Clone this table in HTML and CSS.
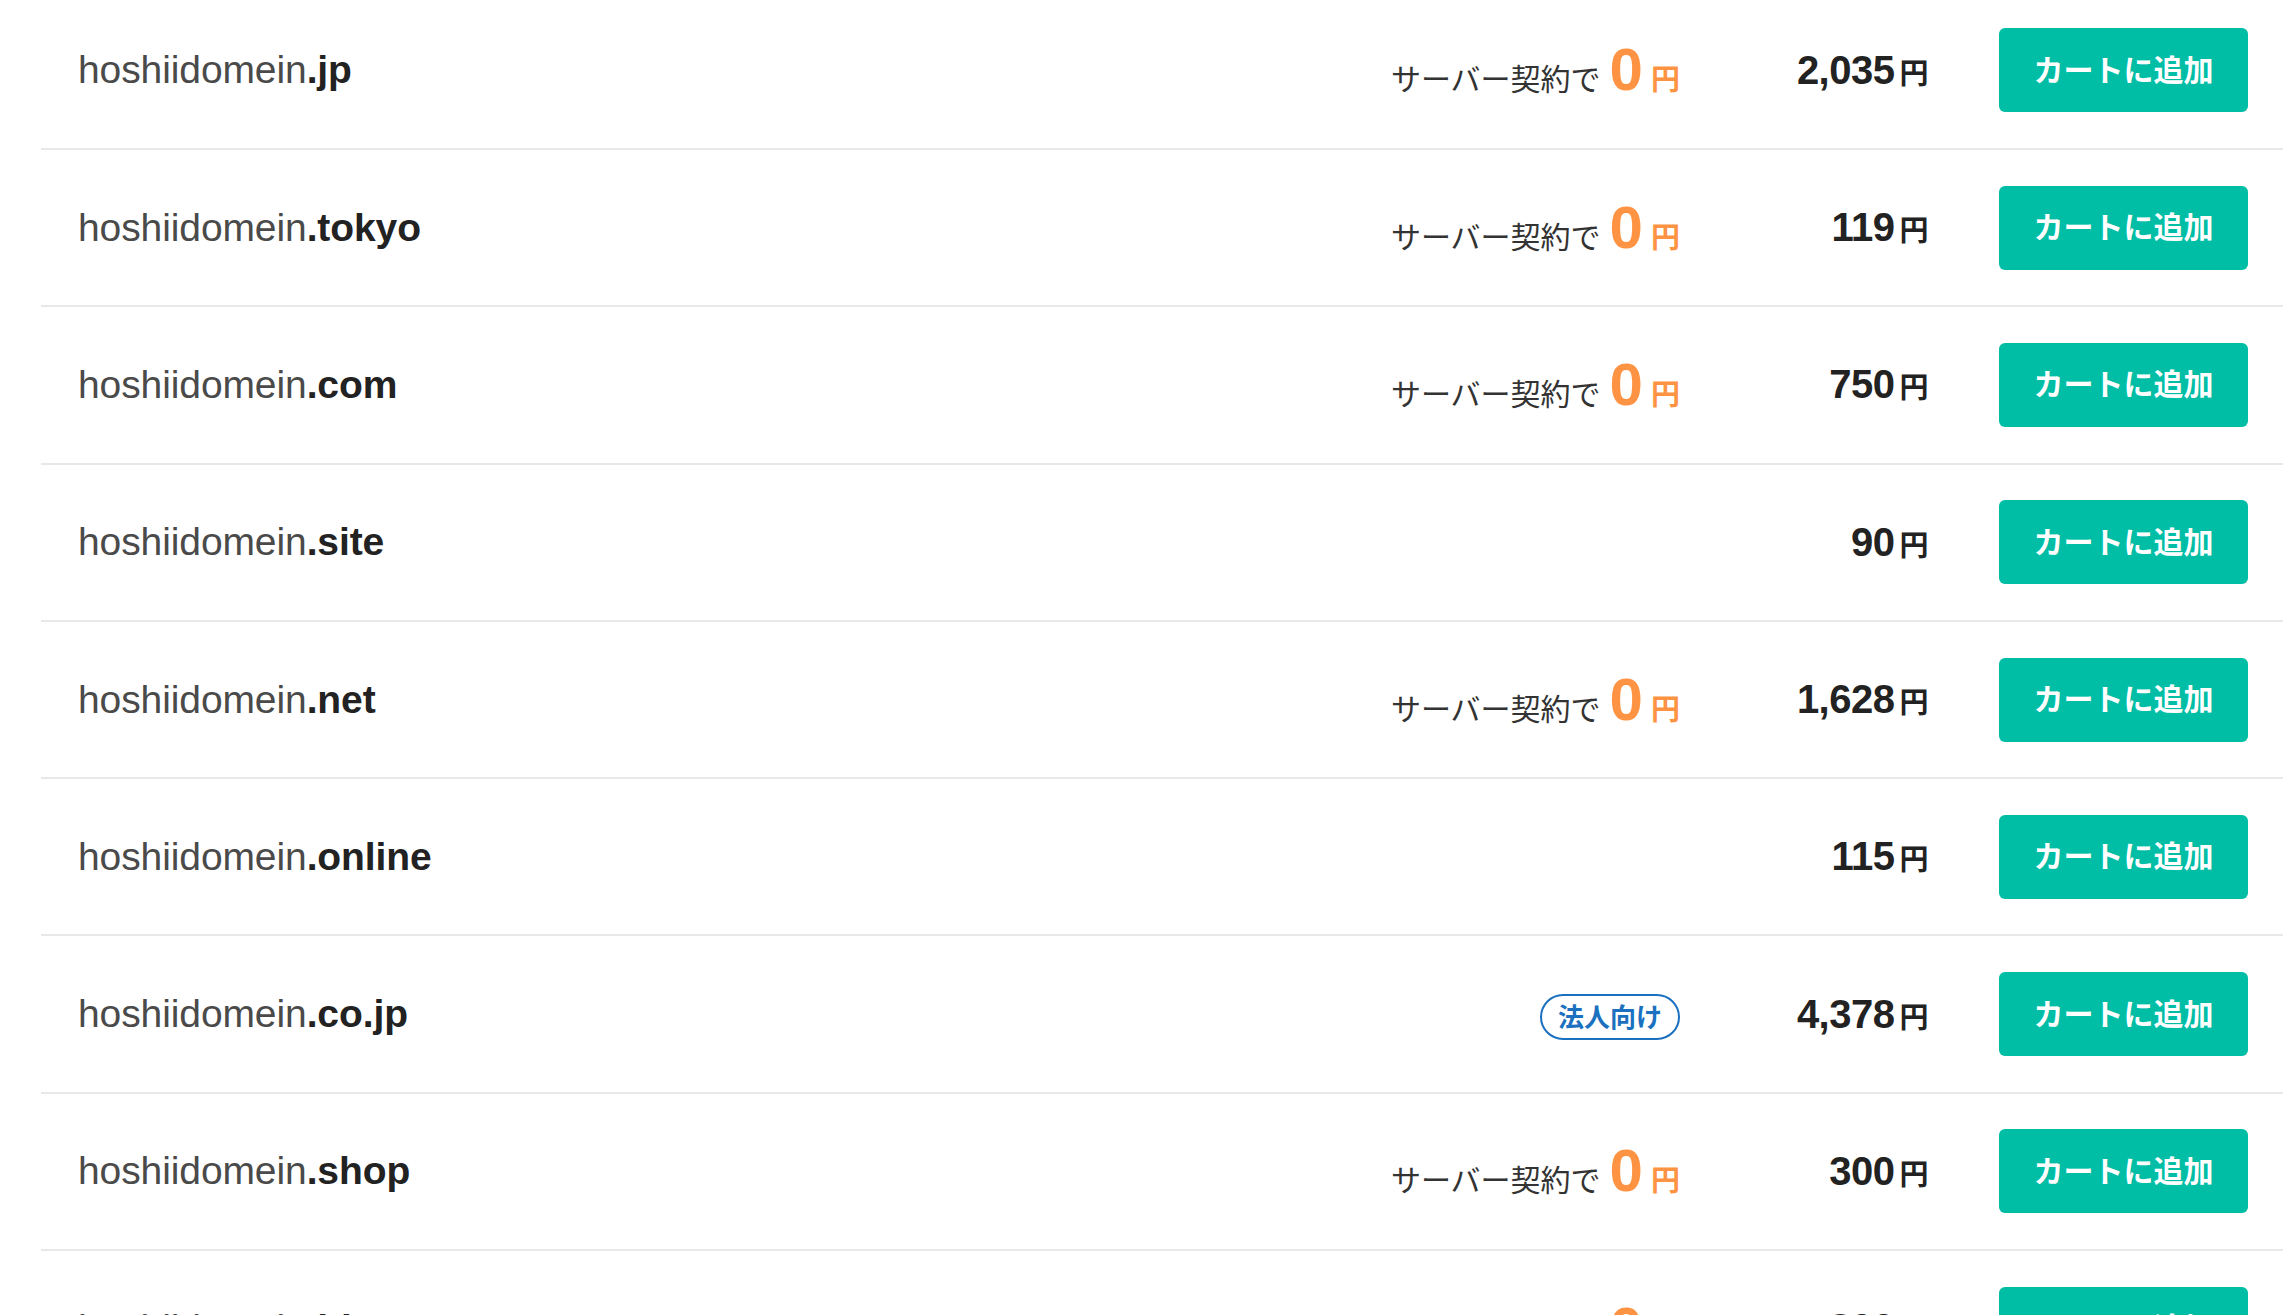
FILE: index.html
```html
<!DOCTYPE html>
<html lang="ja">
<head>
    <meta charset="UTF-8">
    <meta name="viewport" content="width=device-width, initial-scale=1.0">
    <title>ドメイン検索結果</title>
    <link rel="stylesheet" href="styles.css">
</head>
<body>
    <ul class="domain-list">
        <li class="domain-row">
            <div class="domain-name">hoshiidomein<b>.jp</b></div>
            <div class="campaign">サーバー契約で<span class="free-num">0</span><span class="free-yen">円</span></div>
            <div class="price">2,035<span class="yen">円</span></div>
            <button class="cart-btn">カートに追加</button>
        </li>
        <li class="domain-row">
            <div class="domain-name">hoshiidomein<b>.tokyo</b></div>
            <div class="campaign">サーバー契約で<span class="free-num">0</span><span class="free-yen">円</span></div>
            <div class="price">119<span class="yen">円</span></div>
            <button class="cart-btn">カートに追加</button>
        </li>
        <li class="domain-row">
            <div class="domain-name">hoshiidomein<b>.com</b></div>
            <div class="campaign">サーバー契約で<span class="free-num">0</span><span class="free-yen">円</span></div>
            <div class="price">750<span class="yen">円</span></div>
            <button class="cart-btn">カートに追加</button>
        </li>
        <li class="domain-row">
            <div class="domain-name">hoshiidomein<b>.site</b></div>
            <div class="campaign"></div>
            <div class="price">90<span class="yen">円</span></div>
            <button class="cart-btn">カートに追加</button>
        </li>
        <li class="domain-row">
            <div class="domain-name">hoshiidomein<b>.net</b></div>
            <div class="campaign">サーバー契約で<span class="free-num">0</span><span class="free-yen">円</span></div>
            <div class="price">1,628<span class="yen">円</span></div>
            <button class="cart-btn">カートに追加</button>
        </li>
        <li class="domain-row">
            <div class="domain-name">hoshiidomein<b>.online</b></div>
            <div class="campaign"></div>
            <div class="price">115<span class="yen">円</span></div>
            <button class="cart-btn">カートに追加</button>
        </li>
        <li class="domain-row">
            <div class="domain-name">hoshiidomein<b>.co.jp</b></div>
            <div class="campaign"><span class="badge">法人向け</span></div>
            <div class="price">4,378<span class="yen">円</span></div>
            <button class="cart-btn">カートに追加</button>
        </li>
        <li class="domain-row">
            <div class="domain-name">hoshiidomein<b>.shop</b></div>
            <div class="campaign">サーバー契約で<span class="free-num">0</span><span class="free-yen">円</span></div>
            <div class="price">300<span class="yen">円</span></div>
            <button class="cart-btn">カートに追加</button>
        </li>
        <li class="domain-row">
            <div class="domain-name">hoshiidomein<b>.blog</b></div>
            <div class="campaign">サーバー契約で<span class="free-num">0</span><span class="free-yen">円</span></div>
            <div class="price">300<span class="yen">円</span></div>
            <button class="cart-btn">カートに追加</button>
        </li>
    </ul>
</body>
</html>
```

FILE: styles.css
```css
* {
    box-sizing: border-box;
    margin: 0;
    padding: 0;
}

body {
    background: #fff;
    font-family: "Liberation Sans", "Noto Sans CJK JP", sans-serif;
    color: #333;
    overflow: hidden;
}

.domain-list {
    list-style: none;
    margin: -7.3px 7px 0 41px;
}

.domain-row {
    display: flex;
    align-items: center;
    height: 157.3px;
    padding: 0 35px 0 37px;
    border-bottom: 2px solid #e8e8e8;
}

.domain-name {
    flex: 1;
    font-size: 39px;
    color: #4a4a4a;
    letter-spacing: -0.1px;
}

.domain-name b {
    font-weight: 700;
    color: #222;
}

.campaign {
    display: flex;
    align-items: baseline;
    font-family: "Noto Sans CJK JP", sans-serif;
    font-size: 30px;
    font-weight: 400;
    color: #333;
    white-space: nowrap;
}

.free-num {
    font-family: "Liberation Sans", sans-serif;
    font-size: 60px;
    font-weight: 700;
    color: #fe9443;
    margin: 0 8px 0 9px;
    line-height: 1;
}

.free-yen {
    font-size: 29px;
    font-weight: 700;
    color: #fe9443;
}

.badge {
    display: inline-block;
    height: 46px;
    line-height: 40px;
    padding: 0 16px;
    border: 2px solid #1b70bf;
    border-radius: 23px;
    font-size: 26px;
    font-weight: 700;
    color: #1b70bf;
    margin-top: 6px;
}

.price {
    width: 248px;
    text-align: right;
    font-size: 40px;
    font-weight: 700;
    color: #222;
    letter-spacing: -0.5px;
    white-space: nowrap;
}

.price .yen {
    font-family: "Noto Sans CJK JP", sans-serif;
    font-size: 29px;
    margin-left: 5px;
}

.cart-btn {
    width: 249px;
    height: 84px;
    margin-left: 71px;
    padding-bottom: 5px;
    border: none;
    border-radius: 6px;
    background: #00bda5;
    color: #fff;
    font-family: "Noto Sans CJK JP", sans-serif;
    font-size: 30px;
    font-weight: 700;
    cursor: pointer;
}
```
